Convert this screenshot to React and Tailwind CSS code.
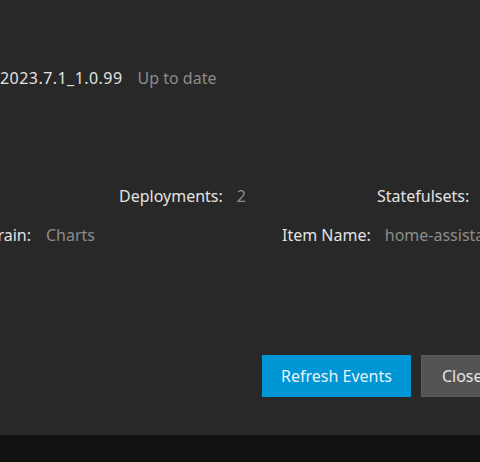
export default function App() {
  const font = { fontFamily: '"Noto Sans", "Open Sans", sans-serif' };
  return (
    <div className="w-[480px] h-[462px] overflow-hidden bg-[#111111] flex flex-col" style={font}>
      <div className="h-[435px] bg-[#282828] flex flex-col overflow-hidden">
        <div className="h-[67px]" />
        <div className="flex items-center gap-[15px] h-[22px] whitespace-nowrap text-[16px] leading-[22px]">
          <span className="text-[#e2e2e2] tracking-[0.45px]">2023.7.1_1.0.99</span>
          <span className="text-[#8c8c8c]">Up to date</span>
        </div>
        <div className="h-[96px]" />
        <div className="flex items-center h-[22px] whitespace-nowrap text-[16px] leading-[22px]">
          <div className="ml-[119px] w-[258px] shrink-0 flex gap-[14px]">
            <span className="text-[#e2e2e2]">Deployments:</span>
            <span className="text-[#8c8c8c]">2</span>
          </div>
          <div className="flex gap-[15px] shrink-0">
            <span className="text-[#e2e2e2]">Statefulsets:</span>
            <span className="text-[#8c8c8c] pl-[8px]">0</span>
          </div>
        </div>
        <div className="h-[17px]" />
        <div className="flex items-center h-[22px] whitespace-nowrap text-[16px] leading-[22px]">
          <div className="w-[282px] shrink-0 flex gap-[15px]">
            <div className="w-[31px] overflow-hidden flex justify-end shrink-0">
              <span className="text-[#e2e2e2]">Catalog Train:</span>
            </div>
            <span className="text-[#8c8c8c]">Charts</span>
          </div>
          <div className="flex gap-[14px] shrink-0">
            <span className="text-[#e2e2e2]">Item Name:</span>
            <span className="text-[#8c8c8c]">home-assistant</span>
          </div>
        </div>
        <div className="h-[109px]" />
        <div className="flex gap-[10px] ml-[262px] whitespace-nowrap">
          <button className="h-[42px] px-[19px] bg-[#0095d5] text-[#e6f4fb] text-[16px] shrink-0">
            Refresh Events
          </button>
          <button className="h-[42px] px-[20px] bg-[#545454] text-[#e6e6e6] text-[16px] border border-dotted border-[#5e5e5e] shrink-0">
            Close
          </button>
        </div>
      </div>
    </div>
  );
}
